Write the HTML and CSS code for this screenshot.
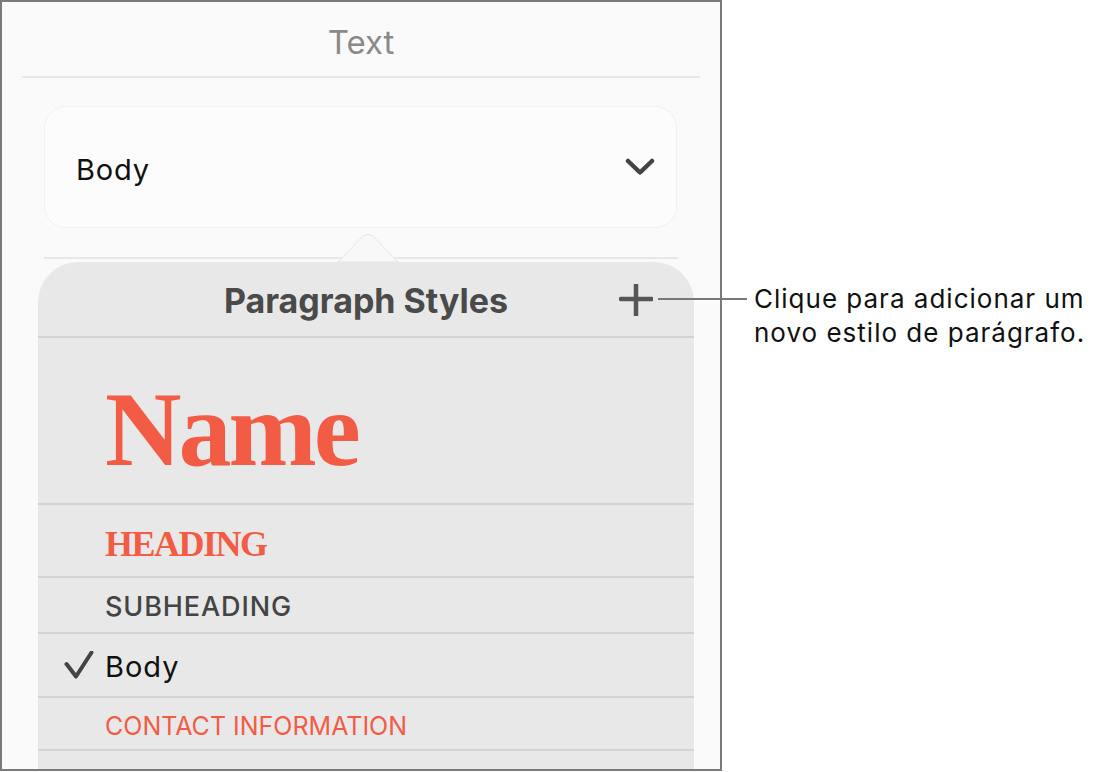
FILE: index.html
```html
<!DOCTYPE html>
<html>
<head>
<meta charset="utf-8">
<link rel="stylesheet" href="styles.css">
</head>
<body>
<div class="page">
  <div class="frame">
    <div class="title">Text</div>
    <div class="rule"></div>
    <div class="dropdown">
      <span class="dd-label">Body</span>
      <svg class="chev" width="30" height="18" viewBox="0 0 30 18"><path d="M3 3 L15 14.5 L27 3" fill="none" stroke="#444" stroke-width="4.5" stroke-linecap="round" stroke-linejoin="round"/></svg>
    </div>
    <div class="rule rule2"></div>
    <div class="popover">
      <svg class="arrow" width="64" height="30" viewBox="0 0 64 30"><path d="M2 29 L26 4 Q32 -1 38 4 L62 29 Z" fill="#f8f8f8" stroke="#e6e6e6" stroke-width="1"/></svg>
      <div class="pop-head">
        <span></span>
        <span class="pop-title">Paragraph Styles</span>
        <svg class="plus" width="34" height="32" viewBox="0 0 34 32"><path d="M2 15 H33 M17 1 V31" fill="none" stroke="#555" stroke-width="4.5" stroke-linecap="round"/></svg>
      </div>
      <div class="row row-name"><span class="s-name">Name</span></div>
      <div class="row row-heading"><span class="s-heading">HEADING</span></div>
      <div class="row row-sub"><span class="s-sub">SUBHEADING</span></div>
      <div class="row row-body">
        <svg class="check" width="30" height="28" viewBox="0 0 30 28"><path d="M2.5 13 L12 25.5 L27.5 1.5" fill="none" stroke="#444" stroke-width="4" stroke-linecap="round" stroke-linejoin="round"/></svg>
        <span class="s-body">Body</span>
      </div>
      <div class="row row-contact"><span class="s-contact">CONTACT INFORMATION</span></div>
    </div>
  </div>
  <div class="callout">Clique para adicionar um<br>novo estilo de parágrafo.</div>
  <div class="leader"></div>
</div>
</body>
</html>
```
FILE: styles.css
```css
html, body {
  margin: 0;
  padding: 0;
  background: #ffffff;
}
body {
  font-family: Inter, "Liberation Sans", sans-serif;
}
.page {
  position: relative;
  display: flex;
  align-items: flex-start;
  width: 1097px;
  height: 772px;
}
.frame {
  box-sizing: border-box;
  width: 722px;
  height: 771px;
  border: 2px solid #7a7a7a;
  background: #fafafa;
  display: flex;
  flex-direction: column;
  overflow: hidden;
}
.title {
  box-sizing: border-box;
  height: 74px;
  padding-top: 20px;
  line-height: 40px;
  font-size: 33px;
  color: #8a8a8a;
  text-align: center;
}
.rule {
  height: 2px;
  background: #e8e8e8;
  margin: 0 20px;
  flex: none;
}
.dropdown {
  box-sizing: border-box;
  height: 122px;
  margin: 28px 43px 0 42px;
  border: 1px solid #f1f1f1;
  border-radius: 22px;
  background: #fcfcfc;
  display: flex;
  align-items: center;
  justify-content: space-between;
  padding: 5px 21px 0 31px;
  flex: none;
}
.dd-label {
  font-size: 29px;
  line-height: 36px;
  letter-spacing: 0.8px;
  color: #111;
}
.chev {
  display: block;
  margin-top: -5px;
}
.rule2 {
  margin: 29px 42px 0 42px;
}
.popover {
  position: relative;
  flex: 1;
  margin: 3px 26px 0 36px;
  background: #e8e8e8;
  border-radius: 40px 40px 0 0;
}
.arrow {
  position: absolute;
  left: 298px;
  top: -29px;
  display: block;
}
.pop-head {
  box-sizing: border-box;
  height: 76px;
  border-bottom: 2px solid #d3d3d3;
  display: grid;
  grid-template-columns: 1fr auto 1fr;
  padding-top: 19px;
}
.pop-title {
  font-size: 34px;
  line-height: 40px;
  font-weight: 700;
  color: #4a4a4a;
}
.plus {
  display: block;
  justify-self: end;
  margin: 3px 41px 0 0;
}
.row {
  box-sizing: border-box;
  border-bottom: 2px solid #d3d3d3;
  padding-left: 67px;
  display: flex;
  align-items: flex-start;
}
.row-name {
  height: 167px;
  padding-top: 39px;
}
.s-name {
  font-family: "Liberation Serif", serif;
  font-weight: 700;
  font-size: 106px;
  line-height: 106px;
  letter-spacing: -3px;
  color: #f25c45;
}
.row-heading {
  height: 73px;
  padding-top: 21px;
}
.s-heading {
  font-family: "Liberation Serif", serif;
  font-weight: 700;
  font-size: 36px;
  line-height: 36px;
  letter-spacing: -1.5px;
  color: #f25c45;
}
.row-sub {
  height: 56px;
  padding-top: 13px;
}
.s-sub {
  font-size: 27px;
  line-height: 32px;
  font-weight: 500;
  letter-spacing: 0.9px;
  color: #444;
}
.row-body {
  height: 64px;
  padding-top: 16px;
  padding-left: 26px;
  gap: 11px;
}
.check {
  display: block;
  margin-top: 1px;
}
.s-body {
  font-size: 29px;
  line-height: 34px;
  letter-spacing: 1px;
  color: #111;
}
.row-contact {
  height: 53px;
  padding-top: 13px;
}
.s-contact {
  font-size: 25px;
  line-height: 30px;
  color: #f25c45;
}
.callout {
  margin-left: 32px;
  padding-top: 282px;
  font-size: 26px;
  line-height: 34px;
  letter-spacing: 1px;
  color: #111;
  white-space: nowrap;
}
.leader {
  position: absolute;
  left: 658px;
  top: 298px;
  width: 89px;
  height: 2px;
  background: #777;
}
```
